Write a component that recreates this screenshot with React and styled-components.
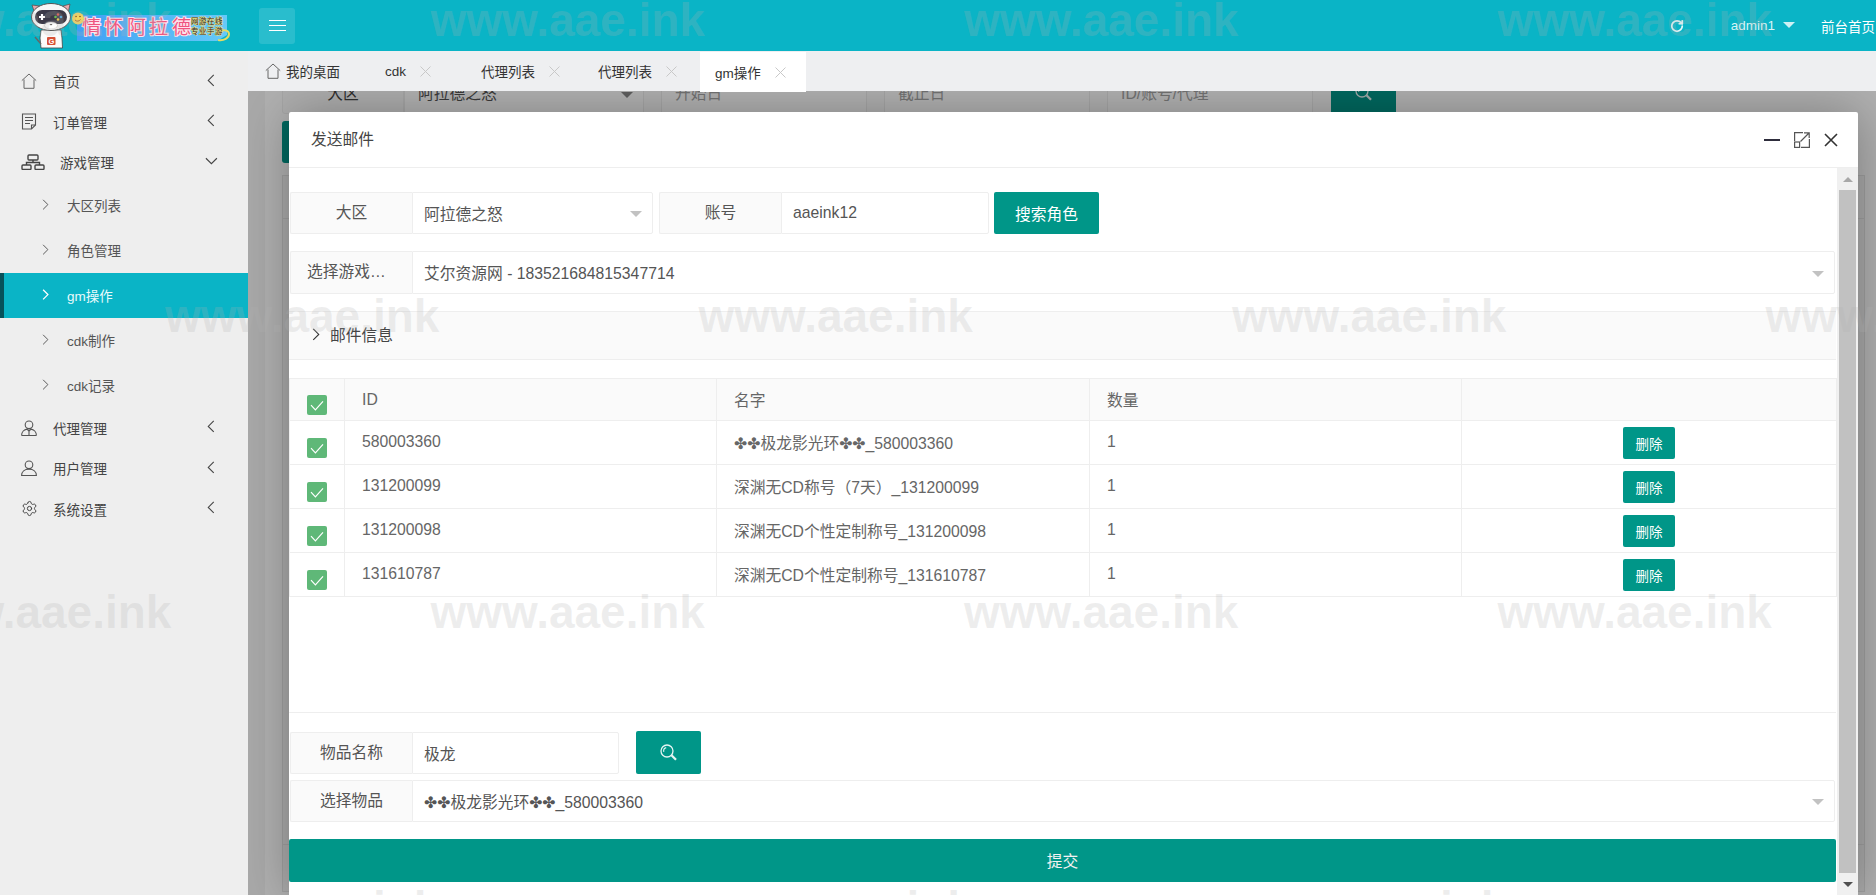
import React from 'react'
import styled, { createGlobalStyle } from 'styled-components'
import { Settings, RotateCw } from 'lucide-react'

const FONT = `"Liberation Sans", "Noto Sans CJK SC", "DejaVu Sans", sans-serif`
const TEAL = '#0ab4c6'
const GREEN = '#009688'
const LINE = '#eeeeee'

const GlobalStyle = createGlobalStyle`
    html, body {
        margin: 0;
        padding: 0;
        height: 100%;
        overflow: hidden;
        font-family: ${FONT};
    }
    * {
        box-sizing: border-box;
    }
`

const chevronPoints = {
    left: '7,1 1,7 7,13',
    right: '1,1 7,7 1,13',
    down: '1,1 7,7 13,1',
}

const Chevron = ({ dir = 'left', size = 8, color = '#444', weight = 1.2 }) => (
    <svg
        width={dir === 'down' ? size * 1.6 : size}
        height={dir === 'down' ? size : size * 1.6}
        viewBox={dir === 'down' ? '0 0 14 8' : '0 0 8 14'}
        fill="none"
        stroke={color}
        strokeWidth={weight}
    >
        <polyline points={chevronPoints[dir]} />
    </svg>
)

const HomeIcon = ({ size = 16 }) => (
    <svg width={size} height={size} viewBox="0 0 16 16" fill="none" stroke="#666" strokeWidth="1">
        <path d="M.8 7.6 8 1l7.2 6.6" />
        <path d="M3 6.5v8.8h10V6.5" />
    </svg>
)

const DocIcon = () => (
    <svg width="16" height="17" viewBox="0 0 16 17" fill="none" stroke="#555" strokeWidth="1.1">
        <path d="M1.5 1h13v11l-4 4h-9z" />
        <path d="M4 4.5h8M4 7.5h8M4 10.5h5M10.5 16v-4h4" />
    </svg>
)

const TreeIcon = () => (
    <svg width="24" height="16" viewBox="0 0 24 16" fill="none" stroke="#444" strokeWidth="1.4">
        <rect x="7" y="1" width="10" height="5" rx="1" />
        <rect x="1" y="11" width="9" height="4.5" rx="1" />
        <rect x="14" y="11" width="9" height="4.5" rx="1" />
        <path d="M12 6v2.5M5.5 11V8.5h13V11" />
    </svg>
)

const GroupIcon = () => (
    <svg width="16" height="16" viewBox="0 0 16 16" fill="none" stroke="#555" strokeWidth="1.1">
        <circle cx="8" cy="4.8" r="3.8" />
        <path d="M.6 15.5c0-3.6 2.6-6 5.4-6.4M15.4 15.5c0-3.6-2.6-6-5.4-6.4M.6 15.5h14.8M8 9.5v6M6 9.2l2 2 2-2" />
    </svg>
)

const UserIcon = () => (
    <svg width="16" height="16" viewBox="0 0 16 16" fill="none" stroke="#555" strokeWidth="1.1">
        <circle cx="8" cy="4.8" r="3.8" />
        <path d="M.6 15.5c0-3.8 3-6.4 7.4-6.4s7.4 2.6 7.4 6.4z" />
    </svg>
)

const SearchIcon = () => (
    <svg width="18" height="17" viewBox="0 0 18 17" fill="none" stroke="#e6f5f3">
        <circle cx="7" cy="7" r="6" strokeWidth="1.3" />
        <path d="M3.8 7.8A3.5 3.5 0 0 1 6.2 3.6" strokeWidth="1.1" />
        <path d="M11.5 11.2l4.5 4.5" strokeWidth="2.3" />
    </svg>
)

const CheckMark = () => (
    <svg width="14" height="11" viewBox="0 0 14 11" fill="none" stroke="#fff" strokeWidth="1.2">
        <path d="M1 5.2l4.4 4.6L13 1.4" />
    </svg>
)

const Logo = () => (
    <LogoSvg width="240" height="51" viewBox="0 0 240 51">
        {/* banner */}
        <defs>
            <linearGradient id="banner" x1="0" x2="1" y1="0" y2="0">
                <stop offset="0" stopColor="#3f9ff4" />
                <stop offset="1" stopColor="#66caf8" />
            </linearGradient>
        </defs>
        <path d="M77 15h150v20l-10 6H77z" fill="url(#banner)" />
        <path d="M218 32c5-3 11-2 11 2s-5 7-11 6" fill="none" stroke="#e6dc62" strokeWidth="2" />
        <BannerTitle x="82 104 127 149 172" y="34">情怀阿拉德</BannerTitle>
        <BannerSmall x="191 199 207 215" y="24">网游在线</BannerSmall>
        <BannerSmall x="191 199 207 215" y="34">专业手游</BannerSmall>
        {/* smiley */}
        <circle cx="78" cy="18.5" r="6" fill="#f2d55e" />
        <path d="M75 20c1.5 1.6 4 1.6 5.5-.5" fill="none" stroke="#b5682a" strokeWidth="1" />
        <circle cx="76" cy="16.5" r=".8" fill="#8a4b1c" />
        <circle cx="80" cy="16.5" r=".8" fill="#8a4b1c" />
        {/* cat */}
        <path d="M41 48l-1-10 1-8h20l1 8 .5 10z" fill="#fbfbfb" stroke="#444" strokeWidth=".8" />
        <path d="M41 44l-6-7" stroke="#666" strokeWidth="1.4" />
        <rect x="47" y="37" width="8.5" height="8" rx="1" fill="#d65137" />
        <text x="48.6" y="44" fontSize="7.5" fill="#fff" fontWeight="700">G</text>
        <path d="M32 5l8 1-5 8zM70 4l-7 2 5 8z" fill="#e8a7ac" stroke="#555" strokeWidth=".8" />
        <ellipse cx="51" cy="17" rx="19.5" ry="13.5" fill="#f7f7f7" stroke="#555" strokeWidth="1" />
        <rect x="35" y="10" width="32" height="14" rx="7" fill="#3c3a48" />
        <path d="M42 14v6M39 17h6" stroke="#fff" strokeWidth="2.2" />
        <circle cx="58" cy="14.5" r="1.3" fill="#e2574c" />
        <circle cx="61" cy="17" r="1.3" fill="#4aa8e0" />
        <circle cx="55.5" cy="17" r="1.3" fill="#6dbb4f" />
        <circle cx="58" cy="19.5" r="1.3" fill="#eec643" />
        <ellipse cx="51" cy="25.5" rx="6.5" ry="3.5" fill="#fff" stroke="#bbb" strokeWidth=".5" />
        <path d="M49.5 24h3l-1.5 1.6z" fill="#555" />
    </LogoSvg>
)

const menuTop = [
    { label: '首页', icon: <HomeIcon /> },
    { label: '订单管理', icon: <DocIcon /> },
]

const subMenu = [
    { label: '大区列表' },
    { label: '角色管理' },
    { label: 'gm操作', active: true },
    { label: 'cdk制作' },
    { label: 'cdk记录' },
]

const menuBottom = [
    { label: '代理管理', icon: <GroupIcon /> },
    { label: '用户管理', icon: <UserIcon /> },
    { label: '系统设置', icon: <Settings size={17} strokeWidth={1.4} color="#444" /> },
]

const tabs = [
    { label: 'cdk', extra: 27 },
    { label: '代理列表', extra: 12 },
    { label: '代理列表' },
    { label: 'gm操作', active: true },
]

const rows = [
    { id: '580003360', name: '✤✤极龙影光环✤✤_580003360', count: 1 },
    { id: '131200099', name: '深渊无CD称号（7天）_131200099', count: 1 },
    { id: '131200098', name: '深渊无CD个性定制称号_131200098', count: 1 },
    { id: '131610787', name: '深渊无CD个性定制称号_131610787', count: 1 },
]

const watermarkRows = [-103, 165, -103, 165]

const App = () => {
    return (
        <>
            <GlobalStyle />
            <Page>
                <Header>
                    <LogoArea>
                        <Logo />
                    </LogoArea>
                    <MenuToggle>
                        <ToggleLine />
                        <ToggleLine />
                        <ToggleLine />
                    </MenuToggle>
                    <HeaderRight>
                        <RotateCw size={14} strokeWidth={3} color="#e4f7f9" />
                        <AdminName>admin1</AdminName>
                        <HeaderCaret />
                        <FrontLink>前台首页</FrontLink>
                    </HeaderRight>
                </Header>
                <Body>
                    <Sidebar>
                        {menuTop.map((m) => (
                            <MenuRow key={m.label}>
                                <MenuIcon>{m.icon}</MenuIcon>
                                <span>{m.label}</span>
                                <MenuArrow><Chevron /></MenuArrow>
                            </MenuRow>
                        ))}
                        <MenuRow>
                            <MenuIcon $wide><TreeIcon /></MenuIcon>
                            <span>游戏管理</span>
                            <MenuArrow $open><Chevron dir="down" /></MenuArrow>
                        </MenuRow>
                        {subMenu.map((s) => (
                            <SubRow key={s.label} $active={s.active}>
                                <Chevron dir="right" size={7} color={s.active ? '#fff' : '#555'} weight={s.active ? 1.6 : 1.2} />
                                <span>{s.label}</span>
                            </SubRow>
                        ))}
                        {menuBottom.map((m) => (
                            <MenuRow key={m.label}>
                                <MenuIcon>{m.icon}</MenuIcon>
                                <span>{m.label}</span>
                                <MenuArrow><Chevron /></MenuArrow>
                            </MenuRow>
                        ))}
                    </Sidebar>
                    <Main>
                        <TabBar>
                            <HomeTab>
                                <HomeIcon />
                                <span>我的桌面</span>
                            </HomeTab>
                            {tabs.map((t, i) => (
                                <Tab key={i} $active={t.active} $extra={t.extra}>
                                    <span>{t.label}</span>
                                    <TabClose>
                                        <svg width="11" height="11" viewBox="0 0 11 11" stroke="#c8c8c8" strokeWidth="1">
                                            <path d="M.5.5l10 10M10.5.5l-10 10" />
                                        </svg>
                                    </TabClose>
                                </Tab>
                            ))}
                        </TabBar>
                        <Stage>
                            <BackPage>
                                <BackFilter>
                                    <BackLabel>大区</BackLabel>
                                    <BackCell $w={240}>
                                        阿拉德之怒
                                        <BackCaret />
                                    </BackCell>
                                    <BackCell $w={206} $dim $gap>开始日</BackCell>
                                    <BackCell $w={206} $dim $gap>截止日</BackCell>
                                    <BackCell $w={206} $dim $gap>ID/账号/代理</BackCell>
                                    <BackSearch><SearchIcon /></BackSearch>
                                </BackFilter>
                                <BackButton />
                                <BackTable>
                                    <BackTableHead />
                                    <BackTableBody />
                                    <BackTableFoot />
                                </BackTable>
                            </BackPage>
                            <Shade />
                            <Modal>
                                <ModalTitle>
                                    <span>发送邮件</span>
                                    <ModalTools>
                                        <MinimizeBar />
                                        <svg width="16" height="16" viewBox="0 0 16 16" fill="none" stroke="#555" strokeWidth="1.2">
                                            <path d="M9 .6H.6V9M15.4 7v8.4H7" />
                                            <rect x=".6" y="10" width="5" height="5.4" />
                                            <path d="M6.5 9.5l8.5-8.5M10 .8h5.2V6" />
                                        </svg>
                                        <svg width="14" height="14" viewBox="0 0 14 14" stroke="#333" strokeWidth="1.6">
                                            <path d="M1 1l12 12M13 1L1 13" />
                                        </svg>
                                    </ModalTools>
                                </ModalTitle>
                                <ModalBody>
                                    <Form>
                                        <FieldRow $h={42} $mb={17}>
                                            <FieldLabel>大区</FieldLabel>
                                            <FieldBox $w={241}>
                                                阿拉德之怒
                                                <SelectCaret />
                                            </FieldBox>
                                            <FieldLabel $ml={6}>账号</FieldLabel>
                                            <FieldBox $w={208}>aaeink12</FieldBox>
                                            <SearchRoleButton>搜索角色</SearchRoleButton>
                                        </FieldRow>
                                        <FieldRow $h={43} $mb={17}>
                                            <FieldLabel>选择游戏角色</FieldLabel>
                                            <FieldBox $grow>
                                                艾尔资源网 - 183521684815347714
                                                <SelectCaret />
                                            </FieldBox>
                                        </FieldRow>
                                        <Collapse>
                                            <Chevron dir="right" size={8} color="#333" />
                                            <span>邮件信息</span>
                                        </Collapse>
                                        <TableWrap>
                                            <ItemTable>
                                                <colgroup>
                                                    <col width="55" />
                                                    <col width="372" />
                                                    <col width="373" />
                                                    <col width="372" />
                                                    <col width="375" />
                                                </colgroup>
                                                <thead>
                                                    <tr>
                                                        <CheckCell as="th" $head><CheckBox><CheckMark /></CheckBox></CheckCell>
                                                        <HeadCell>ID</HeadCell>
                                                        <HeadCell>名字</HeadCell>
                                                        <HeadCell>数量</HeadCell>
                                                        <HeadCell />
                                                    </tr>
                                                </thead>
                                                <tbody>
                                                    {rows.map((r) => (
                                                        <tr key={r.id}>
                                                            <CheckCell><CheckBox><CheckMark /></CheckBox></CheckCell>
                                                            <BodyCell>{r.id}</BodyCell>
                                                            <BodyCell>{r.name}</BodyCell>
                                                            <BodyCell>{r.count}</BodyCell>
                                                            <ActionCell><DeleteButton>删除</DeleteButton></ActionCell>
                                                        </tr>
                                                    ))}
                                                </tbody>
                                            </ItemTable>
                                        </TableWrap>
                                        <FieldRow $h={42} $mb={6}>
                                            <FieldLabel>物品名称</FieldLabel>
                                            <FieldBox $w={207}>极龙</FieldBox>
                                            <ItemSearchButton><SearchIcon /></ItemSearchButton>
                                        </FieldRow>
                                        <FieldRow $h={42} $mb={17}>
                                            <FieldLabel>选择物品</FieldLabel>
                                            <FieldBox $grow>
                                                ✤✤极龙影光环✤✤_580003360
                                                <SelectCaret />
                                            </FieldBox>
                                        </FieldRow>
                                        <SubmitButton>提交</SubmitButton>
                                    </Form>
                                    <ScrollTrack>
                                        <ScrollArrow $up />
                                        <ScrollThumb />
                                        <ScrollArrow />
                                    </ScrollTrack>
                                </ModalBody>
                            </Modal>
                        </Stage>
                    </Main>
                </Body>
                <Watermarks>
                    {watermarkRows.map((offset, i) => (
                        <WatermarkRow key={i} $offset={offset}>
                            {[0, 1, 2, 3, 4].map((n) => (
                                <WatermarkWord key={n}>www.aae.ink</WatermarkWord>
                            ))}
                        </WatermarkRow>
                    ))}
                </Watermarks>
            </Page>
        </>
    )
}

// page
const Page = styled.div`
    position: relative;
    width: 100%;
    height: 100vh;
    overflow: hidden;
    display: flex;
    flex-direction: column;
    font-size: 13.5px;
    color: #444;
`
const Body = styled.div`
    flex: 1;
    min-height: 0;
    display: flex;
`

// header
const Header = styled.header`
    height: 51px;
    flex: none;
    display: flex;
    align-items: center;
    background-color: ${TEAL};
`
const LogoArea = styled.div`
    width: 259px;
    height: 51px;
    flex: none;
`
const LogoSvg = styled.svg`
    display: block;
`
const BannerTitle = styled.text`
    font-size: 19px;
    font-family: ${FONT};
    fill: #ef5580;
    stroke: #ffe3ec;
    stroke-width: 2px;
    paint-order: stroke;
`
const BannerSmall = styled.text`
    font-size: 7.5px;
    font-family: ${FONT};
    fill: #241c3a;
    stroke: #eadb72;
    stroke-width: 1px;
    paint-order: stroke;
`
const MenuToggle = styled.div`
    width: 36px;
    height: 36px;
    border-radius: 3px;
    background-color: rgba(255, 255, 255, 0.13);
    display: flex;
    flex-direction: column;
    align-items: center;
    justify-content: center;
    gap: 3.5px;
`
const ToggleLine = styled.div`
    width: 17px;
    height: 1.5px;
    background-color: #fff;
`
const HeaderRight = styled.div`
    margin-left: auto;
    display: flex;
    align-items: center;
    color: #fff;
    white-space: nowrap;
`
const AdminName = styled.span`
    margin-left: 47px;
    color: #d9f4f6;
`
const HeaderCaret = styled.span`
    margin-left: 8px;
    margin-top: -2px;
    border-left: 6px solid transparent;
    border-right: 6px solid transparent;
    border-top: 6px solid #cdf1f4;
`
const FrontLink = styled.span`
    margin-left: 26px;
    width: 55px;
    overflow: hidden;
    color: #fff;
`

// sidebar
const Sidebar = styled.aside`
    width: 248px;
    flex: none;
    padding-top: 10px;
    background-color: #eeeeee;
`
const MenuRow = styled.div`
    height: 40.5px;
    padding: 0 33px 0 21px;
    display: flex;
    align-items: center;
    color: #444;
`
const MenuIcon = styled.span`
    width: ${(p) => (p.$wide ? '39px' : '32px')};
    flex: none;
    display: flex;
    align-items: center;
`
const MenuArrow = styled.span`
    margin-left: auto;
    margin-top: -2px;
    margin-right: ${(p) => (p.$open ? '-3px' : '0')};
    display: flex;
`
const SubRow = styled.div`
    height: 45px;
    padding-left: ${(p) => (p.$active ? '38px' : '42px')};
    display: flex;
    align-items: center;
    gap: 18px;
    color: ${(p) => (p.$active ? '#e8fafc' : '#555')};
    background-color: ${(p) => (p.$active ? TEAL : 'transparent')};
    border-left: ${(p) => (p.$active ? '4px solid #06525a' : 'none')};
`

// tabs
const Main = styled.main`
    flex: 1;
    min-width: 0;
    display: flex;
    flex-direction: column;
`
const TabBar = styled.div`
    height: 40px;
    flex: none;
    display: flex;
    background-color: #eeeff1;
    position: relative;
    z-index: 3;
`
const HomeTab = styled.div`
    padding: 0 0 0 17px;
    display: flex;
    align-items: center;
    gap: 5px;
    color: #333;
`
const Tab = styled.div`
    height: 40px;
    margin-top: ${(p) => (p.$active ? '1px' : '0')};
    margin-left: ${(p) => 3 + (p.$extra || 0)}px;
    padding: 0 20px 0 15px;
    display: flex;
    align-items: center;
    color: #333;
    background-color: ${(p) => (p.$active ? '#fff' : 'transparent')};
`
const TabClose = styled.span`
    margin-left: 14px;
    display: flex;
`

// page behind the dialog
const Stage = styled.div`
    position: relative;
    flex: 1;
    min-height: 0;
    overflow: hidden;
    background-color: #f2f2f2;
`
const BackPage = styled.div`
    margin-top: -20px;
    margin-left: 17px;
    padding: 0 0 0 17px;
    height: 824px;
    background-color: #fdfdfd;
    color: #666;
    font-size: 15.75px;
`
const BackFilter = styled.div`
    height: 43px;
    display: flex;
`
const BackLabel = styled.div`
    width: 122px;
    display: flex;
    align-items: center;
    justify-content: center;
    background-color: #fafafa;
    border: 1px solid ${LINE};
    border-radius: 3px 0 0 3px;
    color: #444;
`
const BackCell = styled.div`
    position: relative;
    width: ${(p) => p.$w}px;
    margin-left: ${(p) => (p.$gap ? '17px' : '0')};
    padding-left: 13px;
    display: flex;
    align-items: center;
    background-color: #fff;
    border: 1px solid ${LINE};
    color: ${(p) => (p.$dim ? '#a5a5a5' : '#555')};
`
const BackCaret = styled.span`
    position: absolute;
    right: 10px;
    top: 20px;
    border-left: 6px solid transparent;
    border-right: 6px solid transparent;
    border-top: 6px solid #888;
`
const BackSearch = styled.div`
    width: 65px;
    margin-left: 18px;
    display: flex;
    align-items: center;
    justify-content: center;
    background-color: ${GREEN};
`
const BackButton = styled.div`
    width: 120px;
    height: 42px;
    margin-top: 7px;
    border-radius: 3px;
    background-color: ${GREEN};
`
const BackTable = styled.div`
    width: 1583px;
    height: 717px;
    margin-top: 12px;
    display: flex;
    flex-direction: column;
    border: 1px solid #e4e4e4;
    background-color: #f4f4f4;
`
const BackTableHead = styled.div`
    height: 43px;
    flex: none;
    border-bottom: 1px solid #e4e4e4;
`
const BackTableBody = styled.div`
    flex: 1;
`
const BackTableFoot = styled.div`
    height: 47px;
    flex: none;
    border-top: 1px solid #e4e4e4;
`
const Shade = styled.div`
    position: absolute;
    inset: 0;
    background-color: rgba(0, 0, 0, 0.3);
`

// dialog
const Modal = styled.section`
    position: absolute;
    left: 41px;
    top: 21px;
    bottom: 0;
    width: 1569px;
    display: flex;
    flex-direction: column;
    border-radius: 2px 2px 0 0;
    background-color: #fff;
    box-shadow: 1px 1px 50px rgba(0, 0, 0, 0.3);
`
const ModalTitle = styled.div`
    height: 56px;
    flex: none;
    padding: 0 20px 0 22px;
    display: flex;
    align-items: center;
    justify-content: space-between;
    border-bottom: 1px solid ${LINE};
    font-size: 15.75px;
    color: #444;
    span {
        margin-top: -2px;
    }
`
const ModalTools = styled.div`
    display: flex;
    align-items: center;
    gap: 14px;
`
const MinimizeBar = styled.div`
    width: 16px;
    height: 2px;
    background-color: #2e2d3c;
`
const ModalBody = styled.div`
    flex: 1;
    min-height: 0;
    display: flex;
`
const Form = styled.div`
    width: 1548px;
    flex: none;
    padding-top: 24px;
    font-size: 15.75px;
    color: #555;
`
const FieldRow = styled.div`
    height: ${(p) => p.$h}px;
    margin-bottom: ${(p) => p.$mb}px;
    padding: 0 2px 0 1px;
    display: flex;
`
const FieldLabel = styled.div`
    width: 122px;
    flex: none;
    margin-left: ${(p) => p.$ml || 0}px;
    padding: 0 16px;
    line-height: 40px;
    text-align: center;
    white-space: nowrap;
    overflow: hidden;
    text-overflow: ellipsis;
    background-color: #fafafa;
    border: 1px solid ${LINE};
    border-right: none;
    border-radius: 2px 0 0 2px;
`
const FieldBox = styled.div`
    position: relative;
    width: ${(p) => (p.$w ? `${p.$w}px` : 'auto')};
    flex: ${(p) => (p.$grow ? '1' : 'none')};
    padding-left: 11px;
    display: flex;
    align-items: center;
    white-space: nowrap;
    background-color: #fff;
    border: 1px solid ${LINE};
    border-radius: 0 2px 2px 0;
`
const SelectCaret = styled.span`
    position: absolute;
    right: 10px;
    top: 50%;
    margin-top: -2px;
    border-left: 6px solid transparent;
    border-right: 6px solid transparent;
    border-top: 6px solid #c2c2c2;
`
const SearchRoleButton = styled.div`
    width: 105px;
    margin-left: 5px;
    display: flex;
    align-items: center;
    justify-content: center;
    border-radius: 2px;
    background-color: ${GREEN};
    color: #fff;
`
const ItemSearchButton = styled.div`
    width: 65px;
    height: 43px;
    margin-top: -1px;
    margin-left: 17px;
    display: flex;
    align-items: center;
    justify-content: center;
    border-radius: 2px;
    background-color: ${GREEN};
`
const Collapse = styled.div`
    height: 49px;
    margin-bottom: 18px;
    margin-right: 1px;
    padding: 0 0 2px 23px;
    display: flex;
    align-items: center;
    gap: 10px;
    background-color: #fafafa;
    border-top: 1px solid ${LINE};
    border-bottom: 1px solid ${LINE};
    color: #444;
`
const TableWrap = styled.div`
    height: 335px;
    margin-bottom: 19px;
    margin-right: 1px;
    border-bottom: 1px solid ${LINE};
`
const ItemTable = styled.table`
    width: 1547px;
    table-layout: fixed;
    border-collapse: collapse;
    color: #666;
`
const HeadCell = styled.th`
    height: 42px;
    padding: 0 0 0 17px;
    text-align: left;
    font-weight: 400;
    background-color: #fafafa;
    border: 1px solid ${LINE};
`
const BodyCell = styled.td`
    height: 44px;
    padding: 0 0 1px 17px;
    white-space: nowrap;
    border: 1px solid ${LINE};
`
const CheckCell = styled.td`
    padding: ${(p) => (p.$head ? '16px' : '17px')} 0 0;
    vertical-align: top;
    background-color: ${(p) => (p.$head ? '#fafafa' : '#fff')};
    border: 1px solid ${LINE};
`
const CheckBox = styled.div`
    width: 20px;
    height: 20px;
    margin: 0 auto;
    display: flex;
    align-items: center;
    justify-content: center;
    border-radius: 2px;
    background-color: #5fb878;
`
const ActionCell = styled.td`
    padding: 0;
    border: 1px solid ${LINE};
`
const DeleteButton = styled.div`
    width: 52px;
    height: 32px;
    margin: 0 auto;
    display: flex;
    align-items: center;
    justify-content: center;
    border-radius: 2px;
    background-color: ${GREEN};
    color: #fff;
    font-size: 13.5px;
`
const SubmitButton = styled.div`
    height: 43px;
    margin-right: 1px;
    display: flex;
    align-items: center;
    justify-content: center;
    border-radius: 2px;
    background-color: ${GREEN};
    color: #f2f2f2;
`
const ScrollTrack = styled.div`
    flex: 1;
    display: flex;
    flex-direction: column;
    align-items: center;
    background-color: #f0f0f0;
`
const ScrollThumb = styled.div`
    width: 17px;
    flex: 1;
    background-color: #c1c1c1;
`
const ScrollArrow = styled.div`
    height: 22px;
    flex: none;
    display: flex;
    align-items: center;
    justify-content: center;
    &::before {
        content: '';
        border-left: 5px solid transparent;
        border-right: 5px solid transparent;
        border-bottom: ${(p) => (p.$up ? '5px solid #a8a8a8' : 'none')};
        border-top: ${(p) => (p.$up ? 'none' : '5px solid #505050')};
    }
`

// watermark layer over everything
const Watermarks = styled.div`
    position: absolute;
    inset: 0;
    z-index: 10;
    overflow: hidden;
    pointer-events: none;
`
const WatermarkRow = styled.div`
    height: 296px;
    margin-left: ${(p) => p.$offset}px;
    display: flex;
    transform: translateY(-3px);
`
const WatermarkWord = styled.div`
    flex: 0 0 533.5px;
    font-size: 46px;
    line-height: 46px;
    font-weight: 700;
    font-family: "Liberation Sans", sans-serif;
    color: rgba(177, 177, 177, 0.22);
    white-space: nowrap;
`

export default App
